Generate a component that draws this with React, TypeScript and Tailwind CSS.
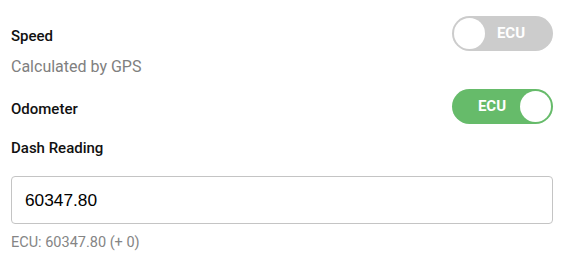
import React, { useState } from 'react';

interface ToggleProps {
  on: boolean;
  label: string;
  onChange: (v: boolean) => void;
}

const Toggle: React.FC<ToggleProps> = ({ on, label, onChange }) => {
  return (
    <button
      onClick={() => onChange(!on)}
      className={`flex items-center w-[101px] h-[35px] rounded-full p-[2px] shrink-0 ${
        on ? 'bg-[#66bb6a]' : 'bg-[#cccccc]'
      }`}
    >
      {on ? (
        <>
          <span className="flex-1 text-center pl-[10px] text-white font-bold text-[15px] leading-none">{label}</span>
          <span className="w-[31px] h-[31px] rounded-full bg-white" />
        </>
      ) : (
        <>
          <span className="w-[31px] h-[31px] rounded-full bg-white" />
          <span className="flex-1 text-center pr-[14px] text-white font-bold text-[15px] leading-none">{label}</span>
        </>
      )}
    </button>
  );
};

export default function App() {
  const [speedEcu, setSpeedEcu] = useState(false);
  const [odoEcu, setOdoEcu] = useState(true);
  const [dash, setDash] = useState('60347.80');

  return (
    <div
      className="w-[571px] h-[277px] bg-white pl-[11px] pr-[18px] pt-[16px]"
      style={{ fontFamily: 'Roboto, "Noto Sans", sans-serif' }}
    >
      <div className="flex items-center justify-between h-[35px]">
        <span className="mt-[4px] text-[15px] leading-5 font-medium text-[#111]">Speed</span>
        <Toggle on={speedEcu} label="ECU" onChange={setSpeedEcu} />
      </div>
      <div className="mt-[4px] text-[16px] leading-6 text-[#808080]">Calculated by GPS</div>

      <div className="flex items-center justify-between h-[35px] mt-[10px]">
        <span className="mt-[4px] text-[15px] leading-5 font-medium text-[#111]">Odometer</span>
        <Toggle on={odoEcu} label="ECU" onChange={setOdoEcu} />
      </div>

      <div className="mt-[14px] text-[15px] leading-5 font-medium text-[#111]">Dash Reading</div>

      <input
        value={dash}
        onChange={(e) => setDash(e.target.value)}
        className="mt-[18px] block w-full h-[48px] border border-[#c4c4c4] rounded-[4px] pl-[13px] text-[17.3px] text-black outline-none"
        style={{ fontFamily: '"Liberation Sans", Arial, sans-serif' }}
      />

      <div className="mt-[9px] text-[14.5px] leading-5 text-[#858585]">ECU: 60347.80 (+ 0)</div>
    </div>
  );
}
